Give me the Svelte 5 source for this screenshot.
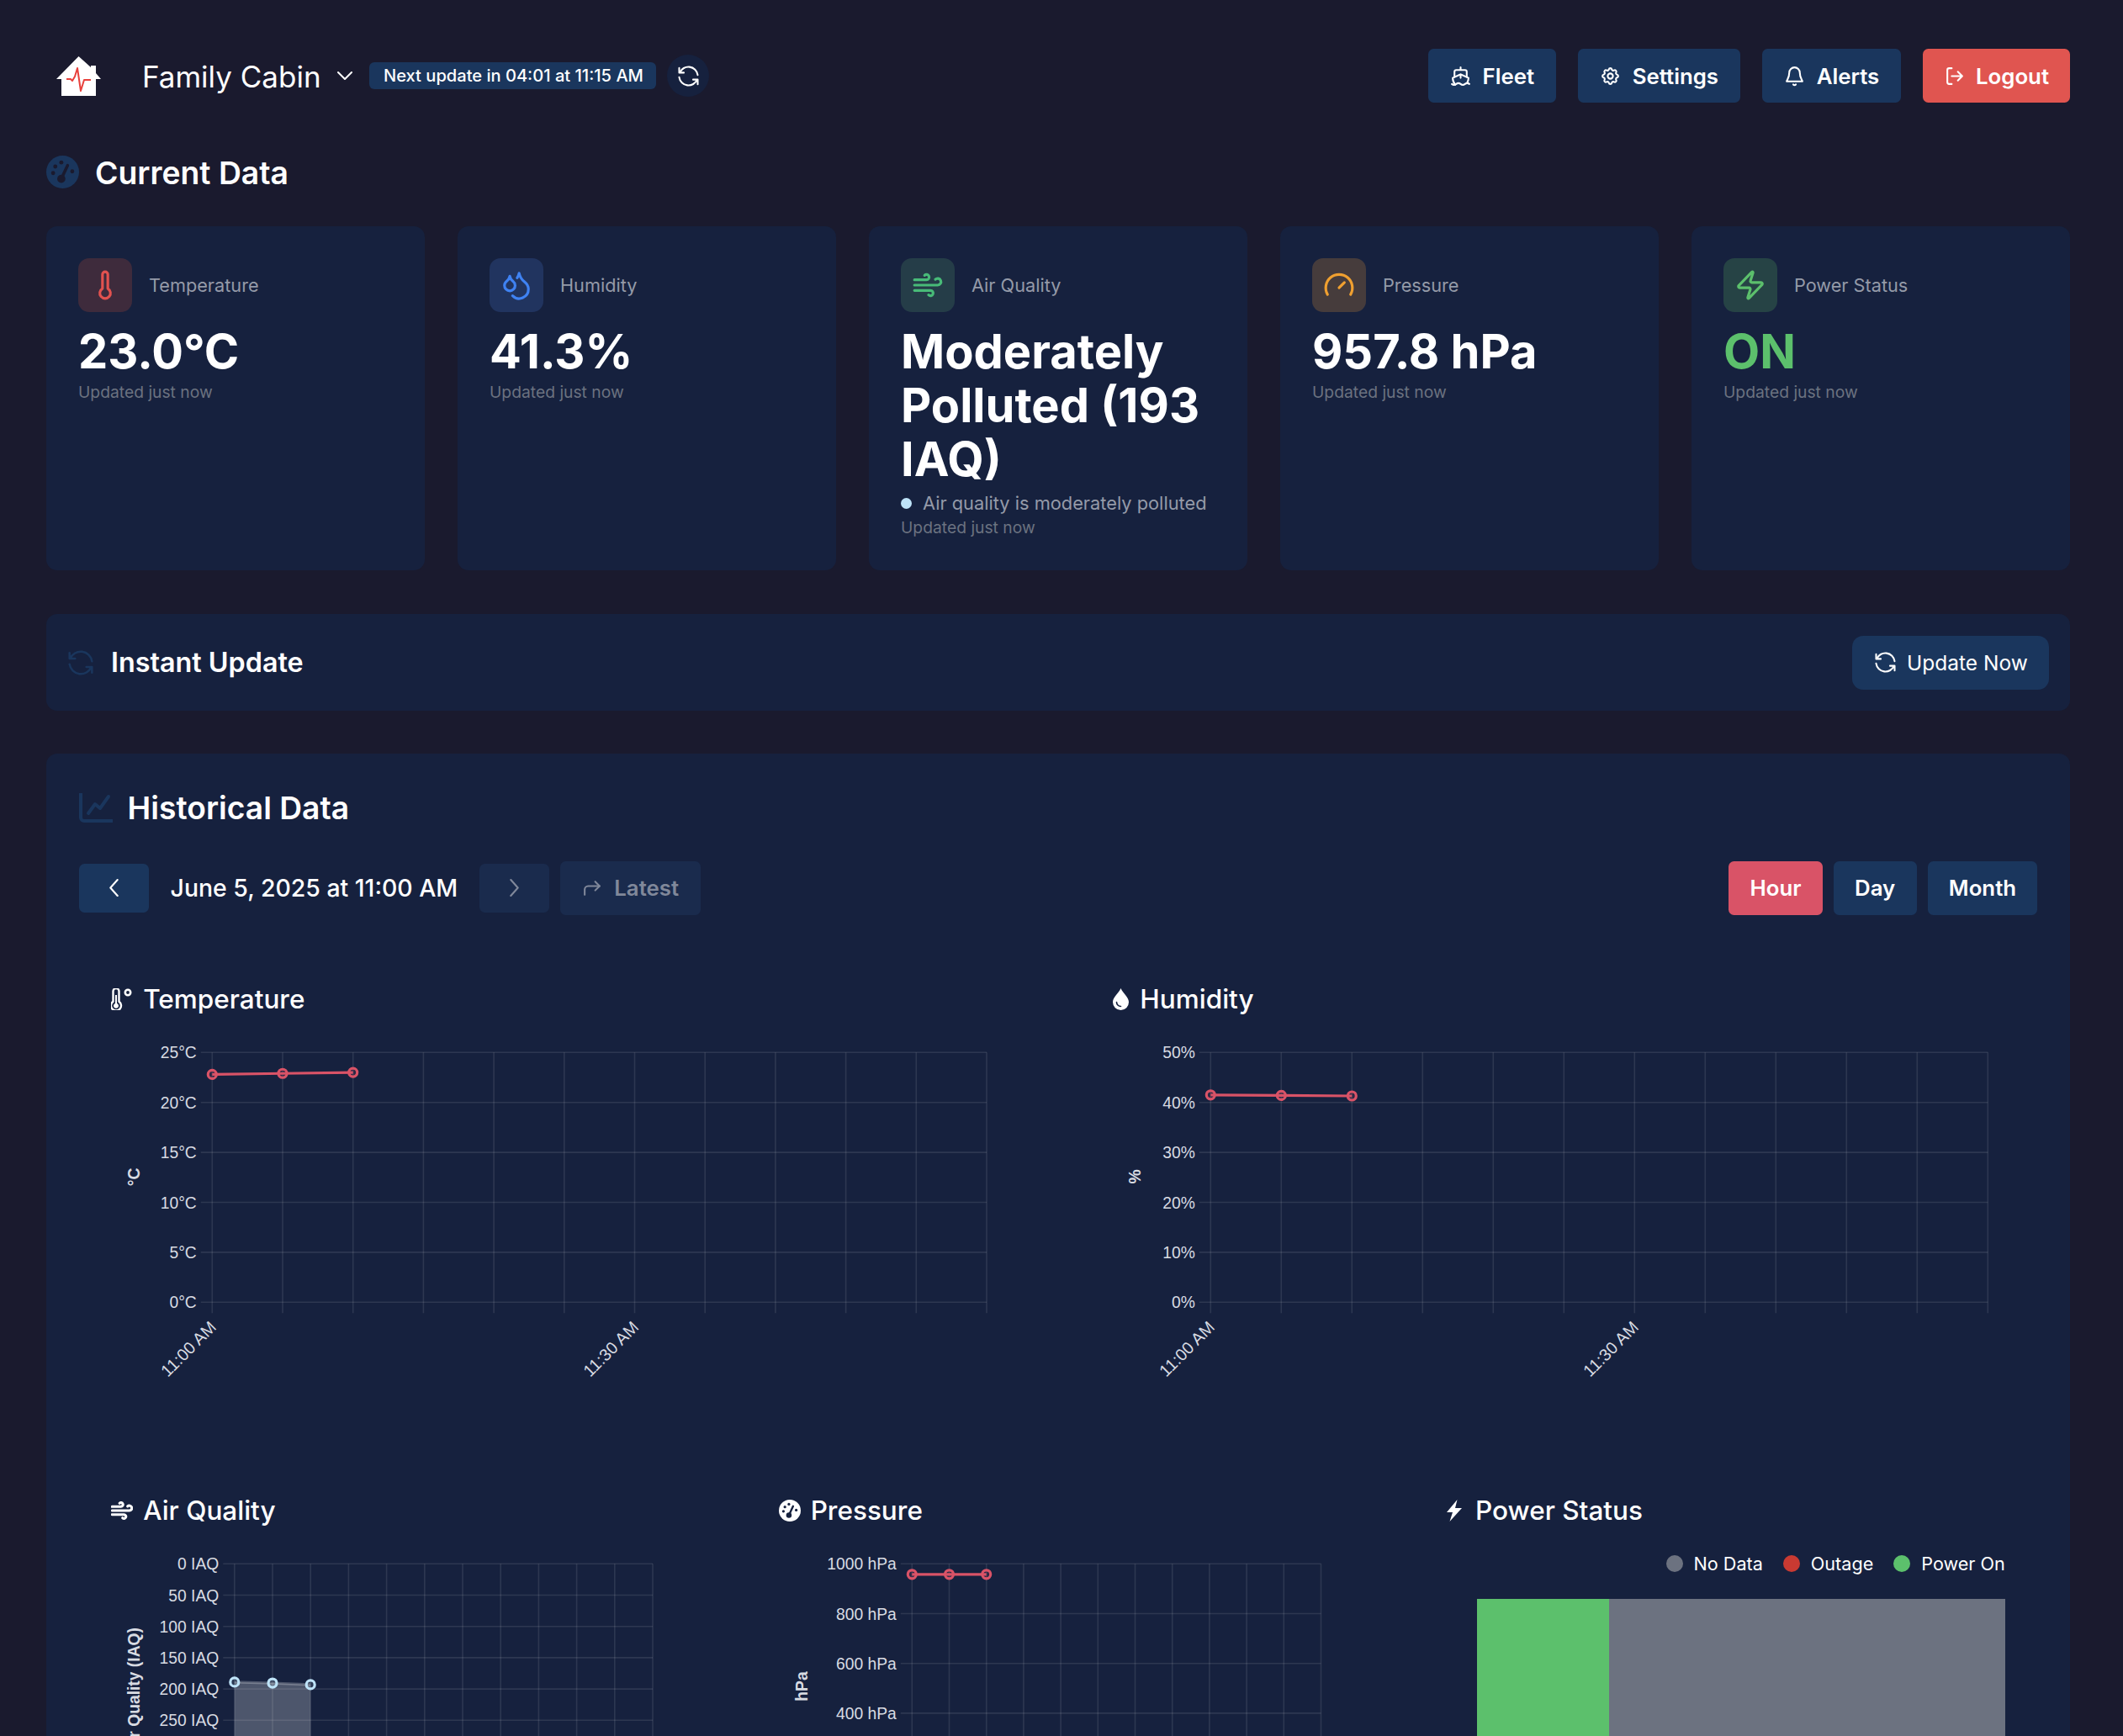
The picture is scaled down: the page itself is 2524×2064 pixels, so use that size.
<script>
  const cards = [
    { label: "Temperature", value: "23.0°C", tone: "red" },
    { label: "Humidity", value: "41.3%", tone: "blue" },
    { label: "Air Quality", value: "Moderately Polluted (193 IAQ)", tone: "teal", desc: "Air quality is moderately polluted" },
    { label: "Pressure", value: "957.8 hPa", tone: "amber" },
    { label: "Power Status", value: "ON", tone: "green" },
  ];

  const Y0 = 25.3;
  // shown = how many y labels are above the fold, xLabels only on the top row
  const charts = {
    temperature: { w: 1061, x0: 120.3, step: 83.7, yStep: 59.4, top: 25, tick: 5, ticks: 6, shown: 6, unit: "°C", title: "°C", titleY: 173.5, data: [22.8, 22.9, 23], xLabels: true },
    humidity: { w: 1061, x0: 117.3, step: 84, yStep: 59.4, top: 50, tick: 10, ticks: 6, shown: 6, unit: "%", title: "%", titleY: 173, data: [41.5, 41.4, 41.3], xLabels: true },
    air: { w: 664, x0: 146.8, step: 45.2, yStep: 37.2, top: 0, tick: -50, ticks: 11, shown: 6, unit: " IAQ", title: "Air Quality (IAQ)", titleY: 176, data: [189, 190.5, 193], fill: true },
    pressure: { w: 664, x0: 158.3, step: 44.2, yStep: 59.2, top: 1000, tick: 200, ticks: 6, shown: 4, unit: " hPa", title: "hPa", titleY: 171, data: [957.8, 957.8, 957.8] },
  };

  const yOf = (c, v) => Y0 + ((c.top - v) / c.tick) * c.yStep;
  const xOf = (c, i) => c.x0 + i * c.step;
  const bottom = (c) => Y0 + (c.ticks - 1) * c.yStep;
  const pts = (c) => c.data.map((v, i) => `${xOf(c, i)},${yOf(c, v)}`).join(" ");
  const area = (c) => `${pts(c)} ${xOf(c, 2)},${bottom(c)} ${c.x0},${bottom(c)}`;
</script>

{#snippet chart(c)}
  <svg class="chart" width={c.w} height="418">
    {#each Array(c.ticks) as _, i}
      <line class="grid" x1={c.x0 - 13.5} x2={xOf(c, 11)} y1={Y0 + i * c.yStep} y2={Y0 + i * c.yStep} />
      {#if i < c.shown}
        <text class="tick" x={c.x0 - 18.5} y={Y0 + i * c.yStep + 7} text-anchor="end">{c.top - i * c.tick}{c.unit}</text>
      {/if}
    {/each}
    {#each Array(12) as _, i}
      <line class="grid" x1={xOf(c, i)} x2={xOf(c, i)} y1={Y0} y2={bottom(c) + 13} />
    {/each}
    {#if c.xLabels}
      {#each [0, 6] as i}
        <text class="tick x-tick" text-anchor="end" transform="translate({xOf(c, i) + 6} {bottom(c) + 31}) rotate(-45)">{i ? "11:30 AM" : "11:00 AM"}</text>
      {/each}
    {/if}
    <text class="axis" text-anchor="middle" transform="translate(33.500 {c.titleY}) rotate(-90)">{c.title}</text>
    {#if c.fill}
      <polygon class="area" points={area(c)} />
      <polyline class="line soft" points={pts(c)} />
    {:else}
      <polyline class="line" points={pts(c)} />
    {/if}
    {#each c.data as v, i}
      <circle class:light={c.fill} class="dot" cx={xOf(c, i)} cy={yOf(c, v)} r="5" />
    {/each}
  </svg>
{/snippet}

{#snippet gauge(cls)}
  <svg class={cls} viewBox="0 0 24 24">
    <mask id="gauge-holes">
      <rect width="24" height="24" fill="#fff" />
      <g fill="#000">
        <circle cx="6.6" cy="8" r="1.5" />
        <circle cx="11" cy="5" r="1.5" />
        <circle cx="5" cy="12.8" r="1.5" />
        <circle cx="19" cy="11.5" r="1.5" />
        <circle cx="11" cy="17" r="3" />
      </g>
      <path d="M11 17L15.6 7.2" stroke="#000" stroke-width="2.2" stroke-linecap="round" />
    </mask>
    <circle cx="12" cy="12" r="12" fill="currentColor" mask="url(#gauge-holes)" />
  </svg>
{/snippet}

{#snippet refresh(cls)}
  <svg class={cls} viewBox="0 0 24 24">
    <path d="M20 11a8.1 8.1 0 0 0-15.5-2M4 5v4h4" />
    <path d="M4 13a8.1 8.1 0 0 0 15.5 2M20 19v-4h-4" />
  </svg>
{/snippet}

{#snippet cardIcon(tone)}
  <svg class="ico card-ico" viewBox="0 0 24 24">
    {#if tone === "red"}
      <path d="M14 4v10.54a4 4 0 1 1-4 0V4a2 2 0 0 1 4 0Z" />
    {:else if tone === "blue"}
      <path d="M7 16.3c2.2 0 4-1.83 4-4.05 0-1.16-.57-2.26-1.71-3.19S7.29 6.75 7 5.3c-.29 1.45-1.14 2.84-2.29 3.76S3 11.1 3 12.25c0 2.22 1.8 4.05 4 4.05z" />
      <path d="M12.56 6.6A10.97 10.97 0 0 0 14 3.02c.5 2.5 2 4.9 4 6.5s3 3.5 3 5.5a6.98 6.98 0 0 1-11.91 4.97" />
    {:else if tone === "teal"}
      <path d="M17.7 7.7a2.5 2.5 0 1 1 1.8 4.3H2" />
      <path d="M9.6 4.6A2 2 0 1 1 11 8H2" />
      <path d="M12.6 19.4A2 2 0 1 0 14 16H2" />
    {:else if tone === "amber"}
      <path d="M12 14l4-4" />
      <path d="M3.34 19a10 10 0 1 1 17.32 0" />
    {:else}
      <path d="M4 14a1 1 0 0 1-.78-1.63l9.9-10.2a.5.5 0 0 1 .86.46l-1.92 6.02A1 1 0 0 0 13 10h7a1 1 0 0 1 .78 1.63l-9.9 10.2a.5.5 0 0 1-.86-.46l1.92-6.02A1 1 0 0 0 11 14z" />
    {/if}
  </svg>
{/snippet}

<div class="page">
  <header class="top">
    <div class="site">
      <svg class="logo" viewBox="0 0 53 47">
        <path fill="#fff" d="M26.5 0L41 13V11h6v9l6 7h-6v20H6V27H0z" />
        <polyline points="12,27 17,27 19,29 22,24 25,14 29,41 33,28 41,28" fill="none" stroke="#e8413c" stroke-width="2" stroke-linejoin="round" />
      </svg>
      <span class="site-name">Family Cabin</span>
      <svg class="ico chevron" viewBox="0 0 18 10"><path d="M1 1l8 8 8-8" /></svg>
      <span class="badge">Next update in 04:01 at 11:15 AM</span>
      <button class="round">{@render refresh("ico refresh-ico")}</button>
    </div>
    <nav class="actions">
      <button class="btn">
        <svg class="ico small" viewBox="0 0 24 24">
          <path d="M12 10.2V14M12 2v3M19 13V7a2 2 0 0 0-2-2H7a2 2 0 0 0-2 2v6" />
          <path d="M19.38 20A11.6 11.6 0 0 0 21 14l-8.19-3.64a2 2 0 0 0-1.62 0L3 14a11.6 11.6 0 0 0 2.81 7.76" />
          <path d="M2 21c.6.5 1.2 1 2.5 1 2.5 0 2.5-2 5-2 1.3 0 1.9.5 2.5 1s1.2 1 2.5 1c2.5 0 2.5-2 5-2 1.3 0 1.9.5 2.5 1" />
        </svg>
        Fleet
      </button>
      <button class="btn">
        <svg class="ico small" viewBox="0 0 24 24">
          <path d="M10.325 4.317c.426-1.756 2.924-1.756 3.35 0a1.724 1.724 0 0 0 2.573 1.066c1.543-.94 3.31.826 2.37 2.37a1.724 1.724 0 0 0 1.065 2.572c1.756.426 1.756 2.924 0 3.35a1.724 1.724 0 0 0-1.066 2.573c.94 1.543-.826 3.31-2.37 2.37a1.724 1.724 0 0 0-2.572 1.065c-.426 1.756-2.924 1.756-3.35 0a1.724 1.724 0 0 0-2.573-1.066c-1.543.94-3.31-.826-2.37-2.37a1.724 1.724 0 0 0-1.065-2.572c-1.756-.426-1.756-2.924 0-3.35a1.724 1.724 0 0 0 1.066-2.573c-.94-1.543.826-3.31 2.37-2.37c1 .608 2.296.07 2.572-1.065z" />
          <circle cx="12" cy="12" r="3" />
        </svg>
        Settings
      </button>
      <button class="btn">
        <svg class="ico small" viewBox="0 0 24 24">
          <path d="M12 2a6 6 0 0 0-6 6c0 6-2.500 8-3 10h18c-.5-2-3-4-3-10a6 6 0 0 0-6-6z" />
          <path d="M10.500 21.500a1.800 1.800 0 0 0 3 0" />
        </svg>
        Alerts
      </button>
      <button class="btn danger">
        <svg class="ico small" viewBox="0 0 24 24">
          <path d="M9 21H6a2 2 0 0 1-2-2V5a2 2 0 0 1 2-2h3" />
          <path d="M9 12h12M16 7l5 5-5 5" />
        </svg>
        Logout
      </button>
    </nav>
  </header>

  <h2 class="section-title">
    {@render gauge("head-ico")}
    <span>Current Data</span>
  </h2>

  <section class="cards">
    {#each cards as card}
      <article class="card">
        <div class="card-head">
          <div class="card-box {card.tone}">{@render cardIcon(card.tone)}</div>
          <span class="card-label">{card.label}</span>
        </div>
        <div class="card-value" class:on={card.value === "ON"}>{card.value}</div>
        {#if card.desc}
          <div class="card-desc"><i></i>{card.desc}</div>
        {/if}
        <div class="card-time">Updated just now</div>
      </article>
    {/each}
  </section>

  <section class="instant">
    <div class="instant-title">
      {@render refresh("ico instant-ico")}
      <h3>Instant Update</h3>
    </div>
    <button class="update">
      {@render refresh("ico refresh-ico")}
      Update Now
    </button>
  </section>

  <section class="history">
    <div class="history-title">
      <svg class="ico line-ico" viewBox="0 0 40 35">
        <path d="M2 0v29a4 4 0 0 0 4 4h34" />
        <path d="M11 24l8-11 6 5 10-14" />
      </svg>
      <h2>Historical Data</h2>
    </div>

    <div class="controls">
      <div class="date-nav">
        <button class="nav-btn"><svg class="ico arrow" viewBox="0 0 12 20"><path d="M10 1L2 10l8 9" /></svg></button>
        <span class="date">June 5, 2025 at 11:00 AM</span>
        <button class="nav-btn off"><svg class="ico arrow" viewBox="0 0 12 20"><path d="M2 1l8 9-8 9" /></svg></button>
        <button class="latest">
          <svg class="ico small" viewBox="0 0 24 24"><path d="M15 15l5-5-5-5" /><path d="M3 20v-6a4 4 0 0 1 4-4h13" /></svg>
          Latest
        </button>
      </div>
      <div class="ranges">
        <button class="range active">Hour</button>
        <button class="range">Day</button>
        <button class="range">Month</button>
      </div>
    </div>

    <div class="graphs">
      <div class="graph wide">
        <h4>
          <svg class="t-ico" viewBox="0 0 26 26">
            <path d="M2.500 3.500a3.500 3.500 0 0 1 7 0v12.200a6 6 0 1 1-7 0z" fill="none" stroke="currentColor" stroke-width="2.400" />
            <path d="M5 8h2v10a3 3 0 1 1-2 0z" fill="currentColor" />
            <circle cx="20" cy="5" r="3.200" fill="none" stroke="currentColor" stroke-width="2.600" />
          </svg>
          Temperature
        </h4>
        {@render chart(charts.temperature)}
      </div>
      <div class="graph wide">
        <h4>
          <svg class="t-ico drop" viewBox="0 0 21 26">
            <path d="M10.500 0C8 6 1 10.500 1 16.500a9.500 9.500 0 0 0 19 0C20 10.500 13 6 10.500 0z" fill="currentColor" />
            <path d="M5.500 16.500a5 5 0 0 0 5 5" fill="none" stroke="#16213e" stroke-width="1.600" stroke-linecap="round" />
          </svg>
          Humidity
        </h4>
        {@render chart(charts.humidity)}
      </div>
      <div class="graph">
        <h4>
          <svg class="ico t-ico thick" viewBox="1 2 22 20">
            <path d="M17.700 7.700a2.500 2.500 0 1 1 1.800 4.300H2" />
            <path d="M9.600 4.600A2 2 0 1 1 11 8H2" />
            <path d="M12.600 19.400A2 2 0 1 0 14 16H2" />
          </svg>
          Air Quality
        </h4>
        {@render chart(charts.air)}
      </div>
      <div class="graph">
        <h4>{@render gauge("t-ico")} Pressure</h4>
        {@render chart(charts.pressure)}
      </div>
      <div class="graph">
        <h4>
          <svg class="t-ico bolt" viewBox="0 0 20 26"><path d="M13.500 0L1 15h7L4.500 26 19 10h-8z" fill="currentColor" /></svg>
          Power Status
        </h4>
        <div class="legend">
          <span><i class="none"></i>No Data</span>
          <span><i class="out"></i>Outage</span>
          <span><i class="pow"></i>Power On</span>
        </div>
        <div class="bar">
          <div class="bar-on"></div>
          <div class="bar-none"></div>
        </div>
      </div>
    </div>
  </section>
</div>

<style>
  :global(body) {
    background: #1a1a2e;
  }
  .page {
    box-sizing: border-box;
    height: 2064px;
    overflow: hidden;
    padding: 58px 63px 0 55px;
    background: #1a1a2e;
    color: #fff;
    font-family: Inter, "Liberation Sans", sans-serif;
  }
  button {
    font-family: inherit;
    border: none;
    color: #fff;
  }
  h2, h3, h4 {
    margin: 0;
  }

  .ico {
    fill: none;
    stroke: currentColor;
    stroke-width: 2;
    stroke-linecap: round;
    stroke-linejoin: round;
  }
  .small {
    width: 25px;
    height: 25px;
    flex: none;
  }
  .refresh-ico {
    width: 33px;
    height: 33px;
    flex: none;
    stroke-width: 1.500;
  }

  .top {
    display: flex;
    justify-content: space-between;
    height: 64px;
  }
  .site, .actions {
    display: flex;
    align-items: center;
  }
  .logo {
    width: 53px;
    height: 47px;
    margin: 0 49px 0 12px;
  }
  .site-name {
    font-size: 35px;
    line-height: 1;
    width: 232px;
    padding-top: 3px;
  }
  .chevron {
    width: 18px;
    height: 10px;
  }
  .badge {
    margin-left: 20px;
    height: 32px;
    width: 341px;
    box-sizing: border-box;
    padding-left: 17px;
    background: #1a365d;
    border-radius: 6px;
    font-size: 20.1px;
    font-weight: 500;
    line-height: 32px;
  }
  .round {
    width: 50px;
    height: 50px;
    margin-left: 13px;
    padding: 0;
    display: flex;
    align-items: center;
    justify-content: center;
    border-radius: 50%;
    background: #16213e;
  }
  .actions {
    gap: 25.7px;
  }
  .btn {
    display: flex;
    align-items: center;
    gap: 14px;
    height: 64px;
    padding: 0 26px;
    background: #1a365d;
    border-radius: 6.500px;
    font-size: 25.8px;
    font-weight: 600;
  }
  .danger {
    background: #e05550;
    gap: 13px;
    padding: 0 25px;
  }

  .section-title {
    display: flex;
    align-items: center;
    gap: 19px;
    margin-top: 63px;
    height: 39px;
    font-size: 37.3px;
    font-weight: 600;
  }
  .section-title span {
    padding-top: 2px;
  }
  .head-ico {
    width: 39px;
    height: 39px;
    color: #1a365d;
  }

  .cards {
    display: grid;
    grid-template-columns: repeat(5, 1fr);
    gap: 39px;
    margin-top: 45px;
  }
  .card {
    background: #16213e;
    border-radius: 13px;
    padding: 38px;
    min-width: 0;
  }
  .card-head {
    display: flex;
    align-items: center;
    gap: 20px;
    margin-bottom: 15px;
  }
  .card-box {
    width: 64px;
    height: 64px;
    border-radius: 13px;
    display: flex;
    align-items: center;
    justify-content: center;
  }
  .card-ico {
    width: 38px;
    height: 38px;
  }
  .red { background: #3e2b3c; color: #e2524f; }
  .blue { background: #21345f; color: #3f82f2; }
  .teal { background: #253d48; color: #48bb78; }
  .amber { background: #463c3c; color: #f0a030; }
  .green { background: #264345; color: #5cc06c; }
  .card-label {
    font-size: 21.7px;
    color: #949aa8;
  }
  .card-value {
    font-size: 56px;
    font-weight: 700;
    line-height: 64px;
  }
  .on {
    color: #5cc06c;
  }
  .card-desc {
    display: flex;
    align-items: center;
    gap: 13px;
    margin-top: 3px;
    font-size: 21.8px;
    line-height: 34px;
    white-space: nowrap;
    color: #949aa8;
  }
  .card-desc i {
    width: 13px;
    height: 13px;
    border-radius: 50%;
    background: #bee3f8;
  }
  .card-time {
    font-size: 19.3px;
    line-height: 25px;
    color: #6b7280;
  }
  .card-value + .card-time {
    margin-top: 4px;
  }

  .instant {
    display: flex;
    align-items: center;
    justify-content: space-between;
    height: 115px;
    margin-top: 52px;
    padding: 0 25px 0 21px;
    background: #16213e;
    border-radius: 13px;
  }
  .instant-title {
    display: flex;
    align-items: center;
    gap: 16px;
  }
  .instant-title h3 {
    font-size: 32.3px;
    font-weight: 600;
  }
  .instant-ico {
    width: 40px;
    height: 40px;
    stroke-width: 1.500;
    color: #1a365d;
  }
  .update {
    display: flex;
    align-items: center;
    gap: 9.500px;
    height: 64px;
    width: 234px;
    padding: 0 0 0 22.500px;
    background: #1a365d;
    border-radius: 13px;
    font-size: 24.5px;
  }

  .history {
    margin-top: 51px;
    padding: 38.6px;
    background: #16213e;
    border-radius: 13px;
  }
  .history-title {
    display: flex;
    align-items: center;
    gap: 18px;
    height: 52px;
  }
  .history-title h2 {
    font-size: 37.2px;
    font-weight: 600;
  }
  .line-ico {
    width: 40px;
    height: 35px;
    color: #1a365d;
    stroke-width: 4;
  }

  .controls {
    display: flex;
    justify-content: space-between;
    align-items: center;
    height: 64px;
    margin-top: 37px;
  }
  .date-nav, .ranges {
    display: flex;
    align-items: center;
  }
  .nav-btn {
    width: 83px;
    height: 58px;
    padding: 0;
    display: flex;
    align-items: center;
    justify-content: center;
    background: #1a365d;
    border-radius: 6.500px;
  }
  .nav-btn.off {
    background: #1a2b4d;
    color: #80889a;
  }
  .arrow {
    width: 13px;
    height: 21px;
  }
  .date {
    margin: 0 26px;
    font-size: 28.4px;
    font-weight: 500;
    white-space: nowrap;
  }
  .latest {
    display: flex;
    align-items: center;
    gap: 13px;
    height: 64px;
    margin-left: 13px;
    padding: 0 26px;
    background: #1a2b4d;
    border-radius: 6.500px;
    font-size: 25.8px;
    font-weight: 600;
    color: #80889a;
  }
  .ranges {
    gap: 13px;
  }
  .range {
    height: 64px;
    padding: 0 25.3px;
    background: #1a365d;
    border-radius: 6.500px;
    font-size: 25.8px;
    font-weight: 600;
  }
  .range.active {
    background: #d95367;
  }

  .graphs {
    display: grid;
    grid-template-columns: repeat(6, 1fr);
    column-gap: 51.500px;
    margin-top: 39px;
  }
  .graph {
    grid-column: span 2;
    height: 556.500px;
    box-sizing: border-box;
    padding: 39px 38.6px;
    min-width: 0;
  }
  .graph.wide {
    grid-column: span 3;
  }
  .graph:nth-child(n + 3) {
    margin-top: 51.500px;
  }
  .graph h4 {
    display: flex;
    align-items: center;
    gap: 12px;
    height: 44px;
    margin-bottom: 16px;
    font-size: 31.5px;
    font-weight: 500;
  }
  .t-ico {
    height: 26px;
    width: 26px;
    flex: none;
  }
  .t-ico.drop {
    width: 21px;
  }
  .t-ico.bolt {
    width: 20px;
    margin-right: 3px;
  }
  .thick {
    stroke-width: 2.600;
  }
  .chart {
    display: block;
  }
  .grid {
    stroke: rgba(255, 255, 255, 0.1);
    stroke-width: 1.600;
  }
  .tick {
    font-family: "Liberation Sans", sans-serif;
    font-size: 19.3px;
    fill: #d8dbe2;
  }
  .x-tick {
    font-size: 20px;
  }
  .axis {
    font-family: "Liberation Sans", sans-serif;
    font-size: 19.3px;
    font-weight: 700;
    fill: #d8dbe2;
  }
  .line {
    fill: none;
    stroke: #d95367;
    stroke-width: 3.200;
  }
  .line.soft {
    stroke: rgba(255, 255, 255, 0.24);
  }
  .area {
    fill: rgba(255, 255, 255, 0.24);
  }
  .dot {
    fill: rgba(217, 83, 103, 0.12);
    stroke: #d95367;
    stroke-width: 3.200;
  }
  .dot.light {
    fill: rgba(190, 227, 248, 0.12);
    stroke: #bee3f8;
  }

  .legend {
    display: flex;
    justify-content: flex-end;
    gap: 24px;
    height: 38px;
    margin-top: 22px;
    font-size: 21.6px;
    align-items: center;
  }
  .legend span {
    display: flex;
    align-items: center;
    gap: 13px;
  }
  .legend i {
    width: 20px;
    height: 20px;
    border-radius: 50%;
  }
  .none { background: #6c7280; }
  .out { background: #c93a32; }
  .pow { background: #5cc06c; }
  .bar {
    display: flex;
    height: 300px;
    margin: 23px 0 0 36.500px;
  }
  .bar-on {
    flex: 1;
    background: #5cc06c;
  }
  .bar-none {
    flex: 3;
    background: #6c7280;
  }
</style>
